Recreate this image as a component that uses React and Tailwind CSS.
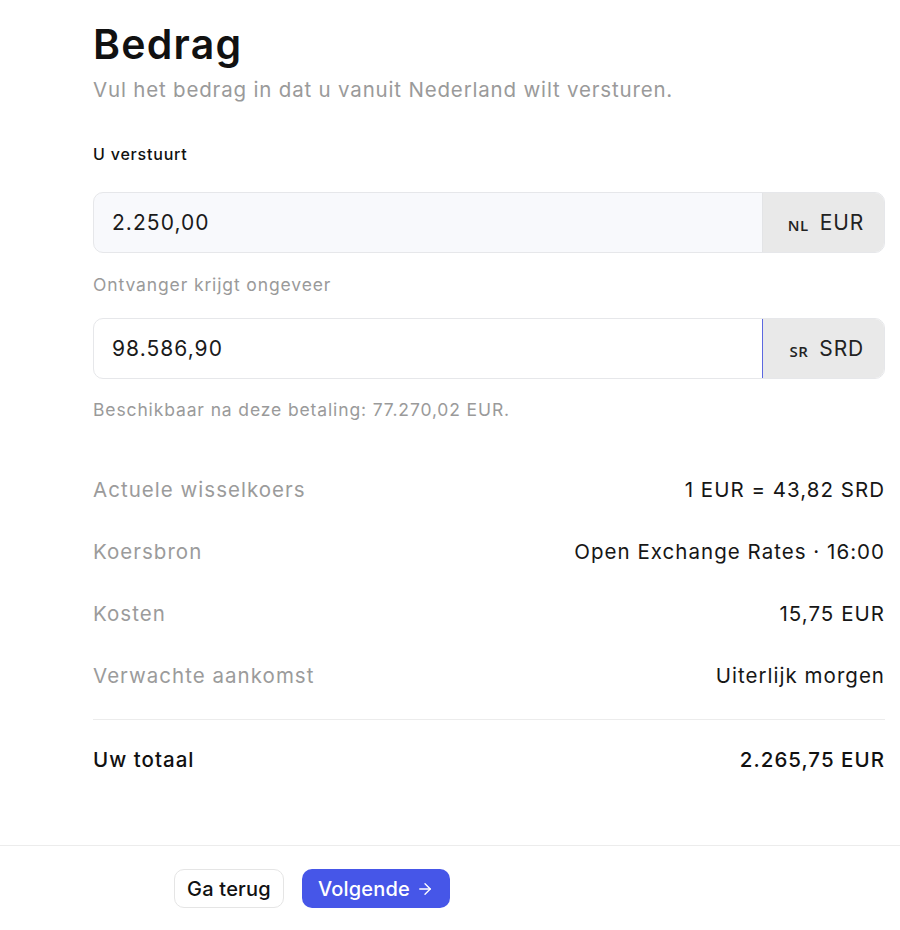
import React from "react";

function Row({ label, value }) {
  return (
    <div className="flex h-[62px] items-center justify-between text-[20.5px] leading-[28px] tracking-[0.05em]">
      <span className="text-[#9b9b9b]">{label}</span>
      <span className="text-[#161616]">{value}</span>
    </div>
  );
}

function AmountInput({ value, code, flag, bg, divider }) {
  return (
    <div className={`flex h-[61px] overflow-hidden rounded-[10px] border border-[#e6e7ea] ${bg}`}>
      <div className="flex flex-1 items-center pl-[18px] text-[21px] tracking-[0.05em] text-[#1a1a1a]">{value}</div>
      <div className={`flex w-[122px] items-center justify-end gap-[11px] bg-[#e9e9e9] pr-[20px] border-l ${divider}`}>
        <span className="text-[15px] font-semibold tracking-[0.5px] text-[#222] mt-[5px]" style={{ fontFamily: '"Open Sans", sans-serif' }}>{flag}</span>
        <span className="text-[21px] tracking-[0.04em] text-[#222]">{code}</span>
      </div>
    </div>
  );
}

export default function App() {
  return (
    <div className="min-h-[930px] bg-white" style={{ fontFamily: 'Inter, "Noto Sans", sans-serif' }}>
      <div className="pl-[93px] pr-[15px] pt-[20px]">
        <h1 className="text-[41px] leading-[48px] font-semibold tracking-[0.03em] text-[#111]">Bedrag</h1>
        <p className="mt-[8px] text-[20.5px] leading-[28px] tracking-[0.04em] text-[#9a9a9a]">Vul het bedrag in dat u vanuit Nederland wilt versturen.</p>
        <div className="mt-[38px] text-[16px] leading-[24px] tracking-[0.05em] font-medium text-[#111]">U verstuurt</div>
        <div className="mt-[26px]">
          <AmountInput value="2.250,00" code="EUR" flag="NL" bg="bg-[#f8f9fc]" divider="border-[#e3e4e6]" />
        </div>
        <div className="mt-[20px] text-[17.5px] leading-[24px] tracking-[0.05em] text-[#9a9a9a]">Ontvanger krijgt ongeveer</div>
        <div className="mt-[21px]">
          <AmountInput value="98.586,90" code="SRD" flag="SR" bg="bg-white" divider="border-[#5c68e0]" />
        </div>
        <div className="mt-[19px] text-[17.5px] leading-[24px] tracking-[0.05em] text-[#9a9a9a]">Beschikbaar na deze betaling: 77.270,02 EUR.</div>
        <div className="mt-[37px]">
          <Row label="Actuele wisselkoers" value="1 EUR = 43,82 SRD" />
          <Row label="Koersbron" value="Open Exchange Rates · 16:00" />
          <Row label="Kosten" value="15,75 EUR" />
          <Row label="Verwachte aankomst" value="Uiterlijk morgen" />
        </div>
        <div className="mt-[12px] h-px bg-[#ececec]" />
        <div className="mt-[9px] flex h-[62px] items-center justify-between text-[20.5px] leading-[28px] tracking-[0.05em] font-medium text-[#111]">
          <span>Uw totaal</span>
          <span>2.265,75 EUR</span>
        </div>
      </div>
      <div className="mt-[54px] border-t border-[#ececec] pt-[23px] pl-[174px] flex gap-[18px]">
        <button className="h-[39px] w-[110px] rounded-[10px] border border-[#e5e5e5] bg-white text-[20px] tracking-[0.01em] font-medium text-[#111]">Ga terug</button>
        <button className="flex h-[39px] w-[148px] items-center justify-center gap-[6px] rounded-[10px] bg-[#4656e8] text-[20px] tracking-[0.01em] font-medium text-white">
          <span>Volgende</span>
          <svg width="18" height="18" viewBox="0 0 24 24" fill="none" stroke="currentColor" strokeWidth="1.8" strokeLinecap="round" strokeLinejoin="round"><path d="M5 12h14"/><path d="m12 5 7 7-7 7"/></svg>
        </button>
      </div>
    </div>
  );
}
